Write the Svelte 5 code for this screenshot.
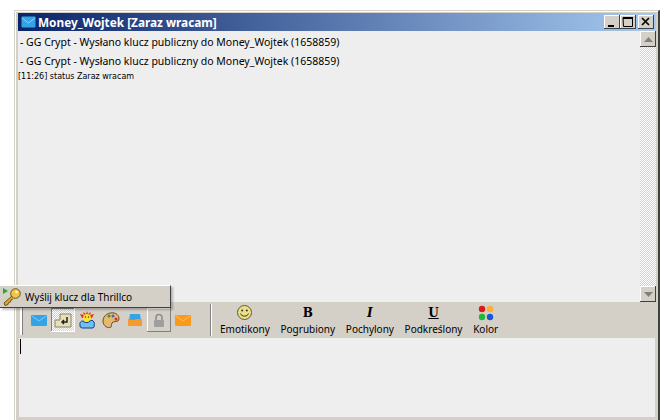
<script>
  const lines = [
    '- GG Crypt - Wysłano klucz publiczny do Money_Wojtek (1658859)',
    '- GG Crypt - Wysłano klucz publiczny do Money_Wojtek (1658859)'
  ];
  const actions = ['Emotikony', 'Pogrubiony', 'Pochylony', 'Podkreślony', 'Kolor'];
</script>

<div class="page">
  <div class="window">
    <div class="titlebar">
      <svg class="envelope" width="15" height="12" viewBox="0 0 15 12">
        <rect x="0.5" y="0.5" width="14" height="11" rx="1" fill="#35a4e6" />
        <path d="M1 2 L7.5 7 L14 2" fill="none" stroke="#8ad2f7" />
      </svg>
      <span class="title">Money_Wojtek [Zaraz wracam]</span>
      <div class="controls">
        <div class="ctl"><svg width="16" height="14" viewBox="0 0 16 14"><rect x="4" y="10" width="6" height="2" fill="#000" /></svg></div>
        <div class="ctl"><svg width="16" height="14" viewBox="0 0 16 14"><path d="M3 2.5h9.500v9h-9z" fill="none" stroke="#000" /><rect x="3" y="2" width="10" height="2" fill="#000" /></svg></div>
        <div class="ctl close"><svg width="16" height="14" viewBox="0 0 16 14"><path d="M4 3l7 7M11 3l-7 7" stroke="#000" stroke-width="1.700" /></svg></div>
      </div>
    </div>

    <div class="chat">
      <div class="messages">
        {#each lines as line}
          <div class="line">{line}</div>
        {/each}
        <div class="status">[11:26] status Zaraz wracam</div>
      </div>
      <div class="scrollbar">
        <div class="sbtn"><svg width="9" height="5" viewBox="0 0 9 5"><path d="M4.500 0L9 5H0z" fill="#808080" /></svg></div>
        <div class="track"></div>
        <div class="sbtn"><svg width="9" height="5" viewBox="0 0 9 5"><path d="M0 0h9L4.500 5z" fill="#808080" /></svg></div>
      </div>
    </div>

    <div class="toolbar">
      <div class="grip"></div>
      <div class="icons">
        <div class="ibtn">
          <svg width="16" height="13" viewBox="0 0 16 13"><rect y="1" width="16" height="11" rx="1" fill="#35a4e6" /><path d="M1 2l7 5 7-5" fill="none" stroke="#7fcbf3" /></svg>
        </div>
        <div class="ibtn checked">
          <svg width="18" height="16" viewBox="0 0 18 16"><path d="M1 8h5V2h11v13H1z" fill="#e6dfb8" stroke="#8a8468" /><path d="M13 5v5H8m2-2l-2 2 2 2" fill="none" stroke="#222" stroke-width="1.500" /></svg>
        </div>
        <div class="ibtn">
          <svg width="18" height="18" viewBox="0 0 18 18"><path d="M9 0l1 3 3-2-1 3 4-1-2 4H4L2 3l4 1-1-3 3 2z" fill="#e23320" /><circle cx="9" cy="7" r="4" fill="#ffe22b" /><path d="M2 14a3 3 0 0 1 3-4 1 1 0 0 1 1 1c2 1 4 1 6-1 1-1 3-1 4 1a3 3 0 0 1 0 3 2 2 0 0 1-2 3H4a2.500 2.500 0 0 1-2-3z" fill="#6cc0f2" stroke="#14408c" /><circle cx="7.500" cy="6" r=".7" fill="#333" /><circle cx="10.500" cy="6" r=".7" fill="#333" /></svg>
        </div>
        <div class="ibtn">
          <svg width="18" height="18" viewBox="0 0 18 18"><path d="M1 10C1 4 7 1 12 2c5 1 6 6 4 8-2 1-5 0-6 2-1 2 0 3-1 4-3 2-8-1-8-6z" fill="#e5b877" stroke="#6b4a20" /><circle cx="7" cy="5" r="1.500" fill="#2f9a3a" /><circle cx="11" cy="5" r="1.500" fill="#2f6fd0" /><circle cx="14" cy="8" r="1.500" fill="#d8302a" /><circle cx="4" cy="9" r="1.500" fill="#e8c820" /></svg>
        </div>
        <div class="ibtn">
          <svg width="16" height="14" viewBox="0 0 16 14"><path d="M3 1h10l1 6H2z" fill="#35a4e6" /><path d="M1 6l5 1 4-1h5v6a1 1 0 0 1-1 1H2a1 1 0 0 1-1-1z" fill="#f59a2c" /></svg>
        </div>
        <div class="ibtn locked">
          <svg width="14" height="15" viewBox="0 0 14 15"><path d="M4 7V4.500a3 3 0 0 1 6 0V7" fill="none" stroke="#8d8d8d" stroke-width="1.600" /><rect x="2" y="7" width="10" height="7" rx="1" fill="#9e9e9e" /></svg>
        </div>
        <div class="ibtn">
          <svg width="16" height="13" viewBox="0 0 16 13"><rect y="1" width="16" height="11" rx="1" fill="#f99a1e" /><path d="M1 2l7 5 7-5" fill="none" stroke="#ffc25a" /></svg>
        </div>
      </div>
      <div class="sep"></div>
      <div class="actions">
        {#each actions as name}
          <div class="action">
            <div class="glyph">
              {#if name === 'Emotikony'}
                <svg width="15" height="15" viewBox="0 0 15 15"><circle cx="7.500" cy="7.500" r="7" fill="#ecdf87" stroke="#5a5a3a" /><circle cx="5.200" cy="5.500" r="1" fill="#333" /><circle cx="9.800" cy="5.500" r="1" fill="#333" /><path d="M3.500 8.500c1 3.500 7 3.500 8 0" fill="none" stroke="#333" /></svg>
              {:else if name === 'Pogrubiony'}
                <b class="fmt">B</b>
              {:else if name === 'Pochylony'}
                <b class="fmt it">I</b>
              {:else if name === 'Podkreślony'}
                <b class="fmt un">U</b>
              {:else}
                <svg width="16" height="16" viewBox="0 0 16 16"><circle cx="4" cy="4" r="3.200" fill="#e01818" /><circle cx="12" cy="4" r="3.200" fill="#f8b038" /><circle cx="4" cy="12" r="3.200" fill="#20b838" /><circle cx="12" cy="12" r="3.200" fill="#1858d8" /></svg>
              {/if}
            </div>
            <span>{name}</span>
          </div>
        {/each}
      </div>
    </div>

    <div class="input"><div class="caret"></div></div>
  </div>

  <div class="popup">
    <svg width="20" height="20" viewBox="0 0 20 20">
      <path d="M1 1l5 3-5 3z" fill="#28a838" />
      <path d="M10 9L2 16l1 2.500 3-1 .5-2 2-.5.5-2 2-1" fill="#d9a92c" stroke="#6e5414" />
      <circle cx="13.500" cy="6.500" r="4.800" fill="#eec64a" stroke="#6e5414" />
      <circle cx="14.500" cy="5" r="1.300" fill="#fff6c8" />
    </svg>
    <span>Wyślij klucz dla Thrillco</span>
  </div>
</div>

<style>
  :global(body) {
    margin: 0;
    background: #fff;
  }

  .page {
    position: relative;
    width: 668px;
    height: 420px;
    overflow: hidden;
    font-family: "Noto Sans", "DejaVu Sans", sans-serif;
    color: #000;
  }

  .window {
    box-sizing: border-box;
    width: 646px;
    height: 410px;
    margin: 10px 0 0 14px;
    padding: 2px 2px 3px 3px;
    background: #d4d0c8;
    border-top: 1px solid #d4d0c8;
    border-left: 1px solid #d4d0c8;
    border-right: 2px solid #404040;
    box-shadow: inset 1px 1px 0 #fff;
    display: flex;
    flex-direction: column;
  }

  .titlebar {
    height: 18px;
    flex: none;
    display: flex;
    align-items: center;
    padding: 0 2px 0 3px;
    gap: 2px;
    background: linear-gradient(to right, #0a246a, #a6caf0);
  }

  .envelope {
    flex: none;
  }

  .title {
    color: #fff;
    font-size: 11.8px;
    font-weight: 700;
    white-space: nowrap;
    flex: 1;
  }

  .controls {
    display: flex;
    gap: 0;
  }

  .ctl {
    width: 16px;
    height: 14px;
    background: #d4d0c8;
    box-shadow: inset -1px -1px 0 #404040, inset 1px 1px 0 #fff;
    display: flex;
  }

  .close {
    margin-left: 2px;
  }

  .chat {
    height: 271px;
    flex: none;
    display: flex;
    background: #eeeeee;
  }

  .messages {
    flex: 1;
    padding: 2px 0 0 0;
  }

  .line {
    font-size: 10.5px;
    line-height: 19px;
    padding-left: 2px;
    white-space: nowrap;
  }

  .status {
    font-family: "DejaVu Sans", sans-serif;
    font-size: 8px;
    line-height: 10px;
    margin-top: 1px;
    white-space: nowrap;
  }

  .scrollbar {
    width: 16px;
    flex: none;
    display: flex;
    flex-direction: column;
    background: repeating-conic-gradient(#fff 0 25%, #d4d0c8 0 50%) 0 0 / 2px 2px;
  }

  .track {
    flex: 1;
  }

  .sbtn {
    height: 16px;
    background: #d4d0c8;
    box-shadow: inset -1px -1px 0 #404040, inset 1px 1px 0 #fff;
    display: flex;
    align-items: center;
    justify-content: center;
  }

  .toolbar {
    height: 36px;
    flex: none;
    display: flex;
    align-items: center;
    padding-left: 2px;
    background: #d4d0c8;
  }

  .grip {
    width: 2px;
    height: 30px;
    background: #fff;
    border-right: 1px solid #808080;
  }

  .icons {
    display: flex;
    align-items: center;
    margin-left: 4px;
  }

  .ibtn {
    box-sizing: border-box;
    width: 24px;
    height: 24px;
    display: flex;
    align-items: center;
    justify-content: center;
  }

  .checked {
    background: repeating-conic-gradient(#fff 0 25%, #d4d0c8 0 50%) 0 0 / 2px 2px;
    box-shadow: inset -1px -1px 0 #fff, inset 1px 1px 0 #808080;
  }

  .locked {
    box-shadow: inset -1px -1px 0 #808080, inset 1px 1px 0 #fff;
  }

  .sep {
    width: 1px;
    height: 32px;
    margin-left: 15px;
    background: #808080;
    border-right: 1px solid #fff;
  }

  .actions {
    display: flex;
    margin-left: 8px;
    gap: 10.7px;
  }

  .action {
    display: flex;
    flex-direction: column;
    align-items: center;
    font-size: 10px;
    line-height: 14px;
    white-space: nowrap;
  }

  .glyph {
    height: 16px;
    margin-bottom: 1px;
    display: flex;
    align-items: center;
    justify-content: center;
  }

  .fmt {
    font-family: "DejaVu Serif", serif;
    font-size: 12px;
    line-height: 14px;
    font-weight: 700;
  }

  .it {
    font-style: italic;
  }

  .un {
    text-decoration: underline;
  }

  .input {
    flex: 1;
    background: #eeeeee;
    margin-left: 1px;
    margin-right: 1px;
    padding-top: 1px;
  }

  .caret {
    width: 1px;
    height: 15px;
    background: #000;
    margin-left: 1px;
  }

  .popup {
    position: absolute;
    left: 0;
    top: 285px;
    box-sizing: border-box;
    width: 171px;
    height: 23px;
    display: flex;
    align-items: center;
    gap: 3px;
    padding-left: 2px;
    font-size: 10px;
    background: #d4d0c8;
    border-top: 1px solid #fff;
    border-right: 1px solid #404040;
    border-bottom: 1px solid #404040;
    box-shadow: 2px 2px 2px rgba(0, 0, 0, 0.25);
  }
</style>
